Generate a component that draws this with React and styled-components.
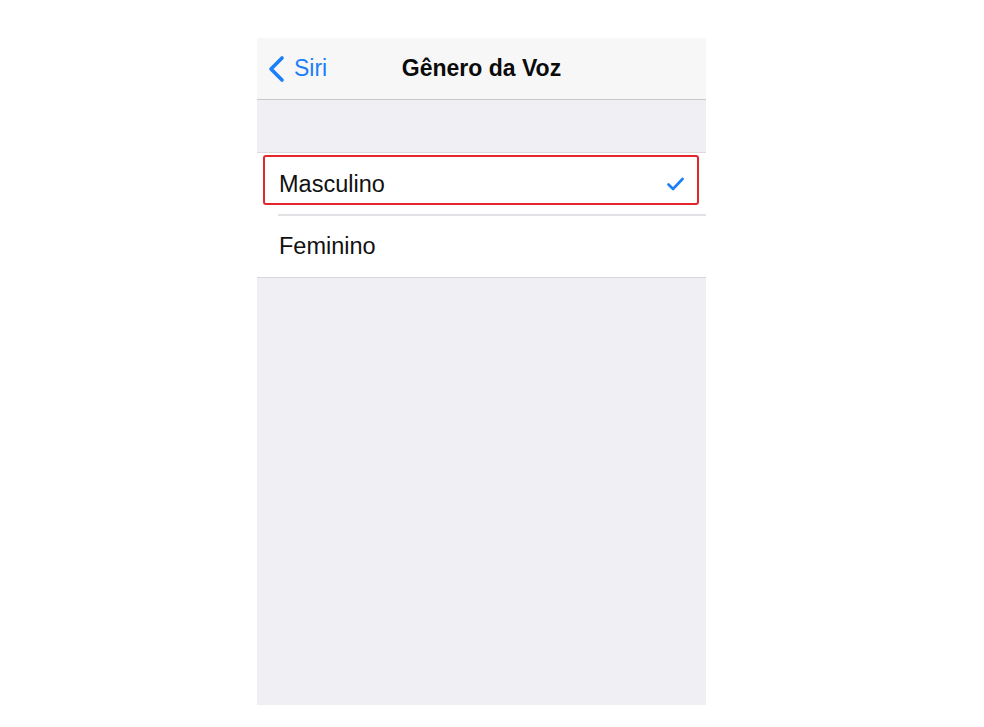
import React from "react"
import styled, { createGlobalStyle } from "styled-components"

const GlobalStyle = createGlobalStyle`
  html, body {
    margin: 0;
    padding: 0;
    background: #ffffff;
  }
  body {
    font-family: "Liberation Sans", Arial, sans-serif;
  }
`

const Page = styled.div`
  width: 984px;
  height: 727px;
  padding-top: 38px;
  padding-left: 257px;
  box-sizing: border-box;
`

const Phone = styled.div`
  width: 449px;
  height: 667px;
  background: #efeff4;
  display: flex;
  flex-direction: column;
`

const NavBar = styled.header`
  height: 61px;
  flex: none;
  background: #f7f7f8;
  border-bottom: 1px solid #c9c9cc;
  display: grid;
  grid-template-columns: 1fr auto 1fr;
  align-items: center;
`

const Back = styled.div`
  display: flex;
  align-items: center;
  gap: 9px;
  padding-left: 10px;
  color: #1a7ff9;
  font-size: 23px;
`

const Title = styled.h1`
  margin: 0;
  font-size: 23px;
  font-weight: 700;
  color: #0b0b0b;
`

const Spacer = styled.div`
  height: 52px;
  flex: none;
`

const Group = styled.div`
  background: #ffffff;
  border-top: 1px solid #dcdce0;
  border-bottom: 1px solid #d6d6da;
`

const Row = styled.div`
  position: relative;
  height: 62px;
  display: flex;
  align-items: center;
  justify-content: space-between;
  padding: 0 22px;
  font-size: 23.5px;
  color: #111111;

  & + &::before {
    content: "";
    position: absolute;
    top: -1px;
    left: 21px;
    right: 0;
    height: 2px;
    background: #e2e2e6;
  }
`

const Highlight = styled.div`
  position: absolute;
  left: 6px;
  right: 7px;
  top: 2px;
  bottom: 10px;
  border: 2px solid #e3262d;
  border-radius: 3px;
  pointer-events: none;
`

const Chevron = () => (
  <svg width="18" height="28" viewBox="0 0 18 28">
    <polyline
      points="15,3 4,14 15,25"
      fill="none"
      stroke="#1a7ff9"
      strokeWidth="3.6"
      strokeLinecap="round"
      strokeLinejoin="round"
    />
  </svg>
)

const Check = () => (
  <svg width="17" height="14" viewBox="0 0 17 14">
    <polyline
      points="1.5,7.5 6,12 15.5,2"
      fill="none"
      stroke="#1a7ff9"
      strokeWidth="2.6"
      strokeLinecap="round"
      strokeLinejoin="round"
    />
  </svg>
)

const options = [
  { label: "Masculino", selected: true },
  { label: "Feminino", selected: false },
]

const App = () => (
  <>
    <GlobalStyle />
    <Page>
      <Phone>
        <NavBar>
          <Back>
            <Chevron />
            <span>Siri</span>
          </Back>
          <Title>Gênero da Voz</Title>
          <div />
        </NavBar>
        <Spacer />
        <Group>
          {options.map(o => (
            <Row key={o.label}>
              <span>{o.label}</span>
              {o.selected && <Check />}
              {o.selected && <Highlight />}
            </Row>
          ))}
        </Group>
      </Phone>
    </Page>
  </>
)

export default App
